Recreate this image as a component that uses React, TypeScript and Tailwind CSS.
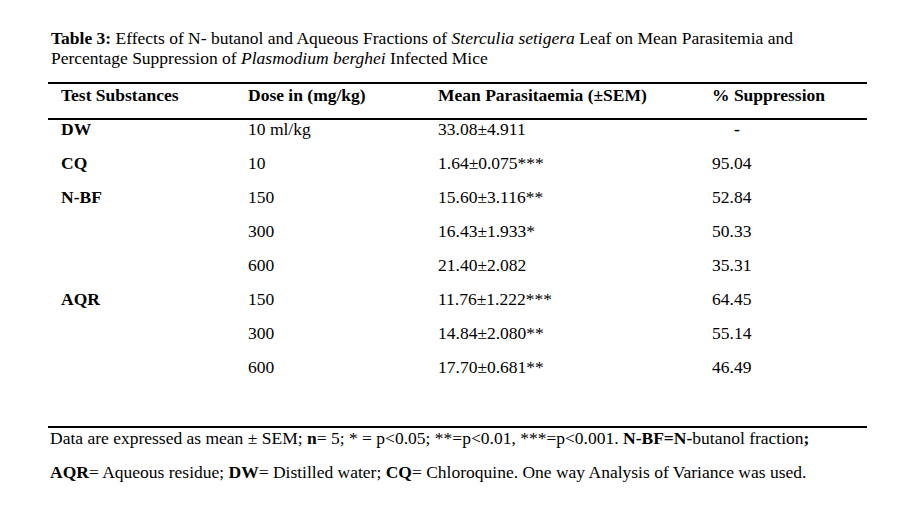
import React from 'react';

type Row = { group?: string; dose: string; mean: string; suppression: string };

const rows: Row[] = [
  { group: 'DW', dose: '10 ml/kg', mean: '33.08±4.911', suppression: '-' },
  { group: 'CQ', dose: '10', mean: '1.64±0.075***', suppression: '95.04' },
  { group: 'N-BF', dose: '150', mean: '15.60±3.116**', suppression: '52.84' },
  { dose: '300', mean: '16.43±1.933*', suppression: '50.33' },
  { dose: '600', mean: '21.40±2.082', suppression: '35.31' },
  { group: 'AQR', dose: '150', mean: '11.76±1.222***', suppression: '64.45' },
  { dose: '300', mean: '14.84±2.080**', suppression: '55.14' },
  { dose: '600', mean: '17.70±0.681**', suppression: '46.49' },
];

const cols = 'grid grid-cols-[200px_190px_274px_155px]';

export default function App() {
  return (
    <div className="min-h-[510px] w-[910px] bg-white text-black font-['Liberation_Serif',serif] text-[17.5px] leading-[20px]">
      <div className="pl-[48px] pt-[28px]">
        {/* caption */}
        <p className="pl-[3px]">
          <b>Table 3:</b> Effects of N- butanol and Aqueous Fractions of <i>Sterculia setigera</i> Leaf on Mean
          Parasitemia and
          <br />
          Percentage Suppression of <i>Plasmodium berghei</i> Infected Mice
        </p>

        <div className="mt-[14px] w-[819px]">
          <div className="h-[2px] bg-black" />
          <div className={`${cols} pt-[1px] pb-[13px] font-bold`}>
            <div className="pl-[13px]">Test Substances</div>
            <div>Dose in (mg/kg)</div>
            <div>Mean Parasitaemia (±SEM)</div>
            <div>% Suppression</div>
          </div>
          <div className="h-[2px] bg-black" />

          <div className="pb-[35px]">
            {rows.map((r, i) => (
              <div key={i} className={`${cols} h-[34px] ${i === 0 ? '-mt-[1px]' : ''}`}>
                <div className="pl-[13px] font-bold">{r.group}</div>
                <div>{r.dose}</div>
                <div>{r.mean}</div>
                <div className={r.suppression === '-' ? 'pl-[22px] font-bold' : ''}>{r.suppression}</div>
              </div>
            ))}
          </div>

          <div className="h-[2px] bg-black" />
          <div className="pl-[2px] flex flex-col gap-[14px]">
            <p>
              Data are expressed as mean ± SEM; <b>n</b>= 5; * = p&lt;0.05; **=p&lt;0.01, ***=p&lt;0.001.{' '}
              <b>N-BF=N-</b>butanol fraction<b>;</b>
            </p>
            <p>
              <b>AQR</b>= Aqueous residue; <b>DW</b>= Distilled water; <b>CQ</b>= Chloroquine. One way Analysis of
              Variance was used.
            </p>
          </div>
        </div>
      </div>
    </div>
  );
}
